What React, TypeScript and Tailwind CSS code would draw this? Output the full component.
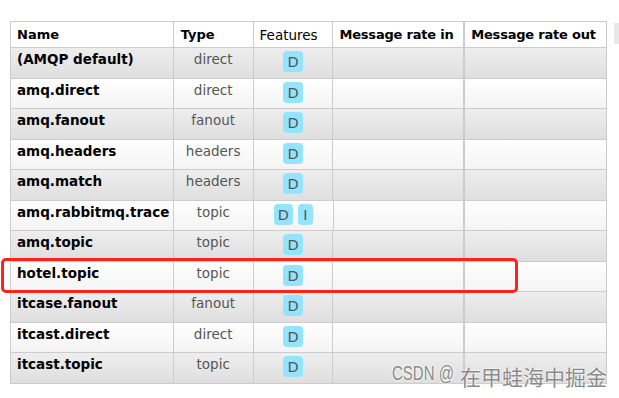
import React from 'react';

const rows = [
  { name: '(AMQP default)', type: 'direct', features: ['D'] },
  { name: 'amq.direct', type: 'direct', features: ['D'] },
  { name: 'amq.fanout', type: 'fanout', features: ['D'] },
  { name: 'amq.headers', type: 'headers', features: ['D'] },
  { name: 'amq.match', type: 'headers', features: ['D'] },
  { name: 'amq.rabbitmq.trace', type: 'topic', features: ['D', 'I'] },
  { name: 'amq.topic', type: 'topic', features: ['D'] },
  { name: 'hotel.topic', type: 'topic', features: ['D'] },
  { name: 'itcase.fanout', type: 'fanout', features: ['D'] },
  { name: 'itcast.direct', type: 'direct', features: ['D'] },
  { name: 'itcast.topic', type: 'topic', features: ['D'] },
];

function Badge({ label }: { label: string }) {
  return (
    <span className="flex h-[21px] min-w-[15px] items-center justify-center rounded-[4px] bg-[#94e4ff] px-[4px] pt-[2px] text-[14.5px] leading-none text-[#555]">
      {label}
    </span>
  );
}

export default function App() {
  return (
    <div className="relative h-[398px] w-[619px] overflow-hidden bg-white font-['DejaVu_Sans',sans-serif] text-[13.5px]">
      <div className="flex pl-[10px] pt-[21px]">
        <div className="w-[597px] border-l border-t border-[#ccc]">
          {/* header */}
          <div className="flex h-[26px] whitespace-nowrap bg-white text-[13px] text-black">
            <div className="w-[163px] border-b border-r border-[#ccc] px-[6px] pt-[3px] font-bold">Name</div>
            <div className="w-[80px] border-b border-r border-[#ccc] px-[7px] pt-[3px] font-bold">Type</div>
            <div className="w-[80px] border-b border-r border-[#ccc] px-[6px] pt-[3px] text-[13.5px]">Features</div>
            <div className="w-[132px] border-b border-r-2 border-[#ccc] px-[6px] pt-[3px] font-bold tracking-[-0.2px]">Message rate in</div>
            <div className="w-[142px] border-b border-r border-[#ccc] px-[6px] pt-[3px] font-bold tracking-[-0.2px]">Message rate out</div>
          </div>
          {rows.map((r, i) => (
            <div
              key={r.name}
              className={`flex ${i % 2 === 0 ? 'h-[31px] bg-gradient-to-b from-[#eeeeee] to-[#dedede]' : 'h-[30px] bg-gradient-to-b from-[#ffffff] to-[#f3f3f3]'}`}
            >
              <div className="w-[163px] whitespace-nowrap border-b border-r border-[#ccc] px-[6px] pt-[1px] font-bold text-black">{r.name}</div>
              <div className="w-[80px] border-b border-r border-[#ccc] pt-[1px] text-center text-[#555]">{r.type}</div>
              <div className="flex w-[80px] justify-center gap-[5px] border-b border-r border-[#ccc] pt-[3px]">
                {r.features.map((f) => (
                  <Badge key={f} label={f} />
                ))}
              </div>
              <div className="w-[132px] border-b border-r-2 border-[#ccc]" />
              <div className="w-[142px] border-b border-r border-[#ccc]" />
            </div>
          ))}
        </div>
        <div className="ml-[7px] mt-[2px] h-[21px] w-[8px] bg-[#e8e8e8]" />
      </div>

      {/* highlight around hotel.topic */}
      <div className="absolute left-[1px] top-[258px] h-[35px] w-[517px] rounded-[5px] border-[3px] border-[#ff2318]" />

      {/* watermark */}
      <div className="absolute left-[392px] top-[364px] flex items-end whitespace-nowrap text-[#8a8a8a] [text-shadow:0_0_2px_#fff,0_0_2px_#fff]">
        <span className="inline-block origin-bottom scale-y-[1.3] font-['Liberation_Sans',sans-serif] text-[15px] leading-[22px]">CSDN @</span>
        <span className="ml-[6px] font-['Noto_Sans_CJK_SC',sans-serif] text-[21px] leading-[24px]">在甲蛙海中掘金</span>
      </div>
    </div>
  );
}
